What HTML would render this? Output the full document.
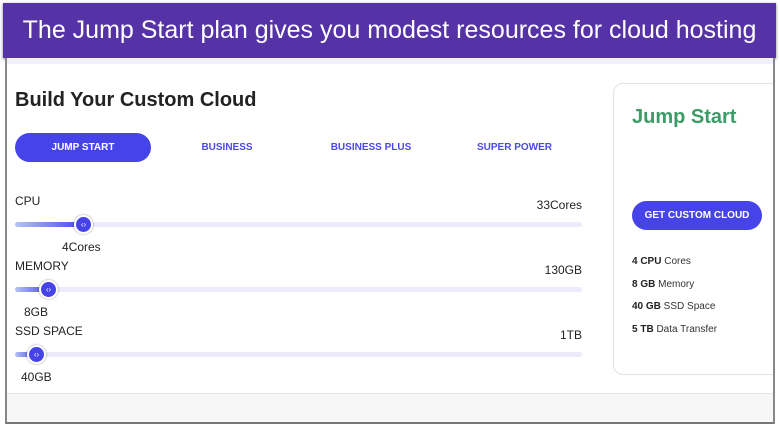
<!DOCTYPE html>
<html><head><style>
body{margin:0;width:780px;height:428px;background:#fff;position:relative;overflow:hidden;font-family:"Liberation Sans",sans-serif;}
.banner{position:absolute;left:3px;top:3px;width:773px;height:55px;background:#5533a6;box-shadow:0 1px 3px rgba(0,0,0,.5);color:#fff;font-size:25px;line-height:55px;text-align:center;}
.page{position:absolute;left:5px;top:58px;width:766px;height:364px;background:#fff;border-left:2px solid #888;border-right:2px solid #888;border-bottom:2px solid #777;overflow:hidden}
.topstrip{position:absolute;left:0;top:0;right:0;height:6px;background:#f2f2f2}
.foot{position:absolute;left:0;right:0;top:335px;bottom:0;background:#f7f7f7;border-top:1px solid #e5e5e5}
h1{position:absolute;left:8px;top:31px;margin:0;font-size:20px;color:#222;font-weight:bold}
.tab{position:absolute;top:75px;height:29px;line-height:29px;font-size:10px;font-weight:bold;color:#4b49e6;text-align:center}
.act{background:#4643e8;color:#fff;border-radius:15px}
.lbl{position:absolute;left:8px;font-size:12px;color:#222}
.val{position:absolute;right:191px;font-size:12px;color:#222}
.track{position:absolute;left:8px;width:567px;height:5px;background:#ebebfb;border-radius:3px}
.fill{position:absolute;left:0;top:0;height:5px;background:linear-gradient(90deg,#b6c3f5,#4643e8);border-radius:3px}
.knob{position:absolute;width:15px;height:15px;border-radius:50%;background:#4643e8;border:2px solid #fff;box-shadow:0 0 2px rgba(0,0,0,.4);color:#fff;font-size:8px;line-height:15px;text-align:center;top:-7px}
.sub{position:absolute;font-size:12px;color:#222}
.card{position:absolute;left:606px;top:25px;width:220px;height:290px;border:1px solid #e3e3e3;border-radius:10px}
.card h2{position:absolute;left:18px;top:22px;margin:0;font-size:20px;color:#3c9b66;font-weight:bold}
.btn{position:absolute;left:18px;top:117px;width:130px;height:29px;background:#4643e8;color:#fff;border-radius:15px;font-size:10px;font-weight:bold;text-align:center;line-height:29px}
.li{position:absolute;left:18px;font-size:10px;color:#333}
.li b{color:#222}
</style></head><body>
<div class="banner">The Jump Start plan gives you modest resources for cloud hosting</div>
<div class="page">
<div class="topstrip"></div>
<h1>Build Your Custom Cloud</h1>
<div class="tab act" style="left:8px;width:136px">JUMP START</div>
<div class="tab" style="left:180px;width:80px">BUSINESS</div>
<div class="tab" style="left:318px;width:92px">BUSINESS PLUS</div>
<div class="tab" style="left:460px;width:95px">SUPER POWER</div>

<div class="lbl" style="top:136px">CPU</div><div class="val" style="top:140px">33Cores</div>
<div class="track" style="top:164px"><div class="fill" style="width:70px"></div><div class="knob" style="left:59px">‹›</div></div>
<div class="sub" style="left:55px;top:182px">4Cores</div>

<div class="lbl" style="top:201px">MEMORY</div><div class="val" style="top:205px">130GB</div>
<div class="track" style="top:229px"><div class="fill" style="width:35px"></div><div class="knob" style="left:24px">‹›</div></div>
<div class="sub" style="left:17px;top:247px">8GB</div>

<div class="lbl" style="top:266px">SSD SPACE</div><div class="val" style="top:270px">1TB</div>
<div class="track" style="top:294px"><div class="fill" style="width:22px"></div><div class="knob" style="left:12px">‹›</div></div>
<div class="sub" style="left:14px;top:312px">40GB</div>

<div class="card">
<h2>Jump Start</h2>
<div class="btn">GET CUSTOM CLOUD</div>
<div class="li" style="top:172px"><b>4 CPU</b> Cores</div>
<div class="li" style="top:195px"><b>8 GB</b> Memory</div>
<div class="li" style="top:217px"><b>40 GB</b> SSD Space</div>
<div class="li" style="top:240px"><b>5 TB</b> Data Transfer</div>
</div>
<div class="foot"></div>
</div>
</body></html>
